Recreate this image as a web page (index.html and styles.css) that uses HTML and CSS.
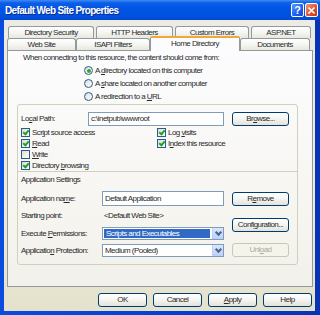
FILE: index.html
```html
<!DOCTYPE html>
<html lang="en">
<head>
  <meta charset="UTF-8">
  <title>Default Web Site Properties</title>
  <link rel="stylesheet" href="styles.css">
</head>
<body>
  <div class="window">
    <div class="titlebar">
      <span class="title">Default Web Site Properties</span>
      <div class="title-buttons">
        <span class="tbtn help">?</span>
        <span class="tbtn close">
          <svg width="9" height="9" viewBox="0 0 9 9"><path d="M1.5 1.5 L7.5 7.5 M7.5 1.5 L1.5 7.5" stroke="#fff" stroke-width="1.6"/></svg>
        </span>
      </div>
    </div>

    <div class="frame">
      <div class="tabs back">
        <span class="tab t-sec">Directory Security</span>
        <span class="tab t-http">HTTP Headers</span>
        <span class="tab t-err">Custom Errors</span>
        <span class="tab t-asp">ASP.NET</span>
      </div>
      <div class="tabs front">
        <span class="tab t-web">Web Site</span>
        <span class="tab t-isapi">ISAPI Filters</span>
        <span class="tab t-home active">Home Directory</span>
        <span class="tab t-docs">Documents</span>
      </div>

      <div class="panel">
        <div class="intro">When connecting to this resource, the content should come from:</div>
        <div class="radios">
          <div class="radio-row"><span class="radio on"></span><span>A <u>d</u>irectory located on this computer</span></div>
          <div class="radio-row"><span class="radio"></span><span>A <u>s</u>hare located on another computer</span></div>
          <div class="radio-row"><span class="radio"></span><span>A redirection to a <u>U</u>RL</span></div>
        </div>

        <div class="groupbox">
          <div class="path-row">
            <span class="lbl-path">Lo<u>c</u>al Path:</span>
            <span class="field path">c:\inetpub\wwwroot</span>
            <span class="btn browse">Br<u>o</u>wse...</span>
          </div>

          <div class="checks">
            <div class="check-col first">
              <div class="check-row"><span class="check on"></span><span>Scr<u>i</u>pt source access</span></div>
              <div class="check-row"><span class="check on"></span><span><u>R</u>ead</span></div>
              <div class="check-row"><span class="check"></span><span><u>W</u>rite</span></div>
              <div class="check-row"><span class="check on"></span><span>Directory <u>b</u>rowsing</span></div>
            </div>
            <div class="check-col">
              <div class="check-row"><span class="check on"></span><span>Log <u>v</u>isits</span></div>
              <div class="check-row"><span class="check on"></span><span>I<u>n</u>dex this resource</span></div>
            </div>
          </div>

          <div class="divider"></div>
          <div class="section-title">Application Settings</div>

          <div class="app">
            <div class="app-fields">
              <div class="app-row r-name">
                <span class="lbl">Application na<u>m</u>e:</span>
                <span class="field">Default Application</span>
              </div>
              <div class="app-row r-start">
                <span class="lbl">Starting point:</span>
                <span class="value">&lt;Default Web Site&gt;</span>
              </div>
              <div class="app-row r-exec">
                <span class="lbl">Execute <u>P</u>ermissions:</span>
                <span class="select focus"><span class="sel-text">Scripts and Executables</span><span class="arrow"></span></span>
              </div>
              <div class="app-row r-prot">
                <span class="lbl">Applicatio<u>n</u> Protection:</span>
                <span class="select"><span class="sel-text">Medium (Pooled)</span><span class="arrow"></span></span>
              </div>
            </div>
            <div class="app-buttons">
              <span class="btn remove">R<u>e</u>move</span>
              <span class="btn config">Confi<u>g</u>uration...</span>
              <span class="btn unload disabled">Unl<u>o</u>ad</span>
            </div>
          </div>
        </div>
      </div>

      <div class="dialog-buttons">
        <span class="btn">OK</span>
        <span class="btn">Cancel</span>
        <span class="btn"><u>A</u>pply</span>
        <span class="btn">Help</span>
      </div>
    </div>
  </div>
</body>
</html>
```

FILE: styles.css
```css
* {
  box-sizing: border-box;
}

body {
  margin: 0;
  width: 320px;
  height: 315px;
  overflow: hidden;
  font-family: 'Liberation Sans', Arial, sans-serif;
  font-size: 8px;
  letter-spacing: -0.55px;
  color: #2a2a2a;
}

u {
  text-decoration: underline;
  text-underline-offset: 1px;
}

.window {
  height: 315px;
  display: flex;
  flex-direction: column;
  background: linear-gradient(to right, #0a4be0, #0640d0 50%, #0733b8);
}

/* title bar */
.titlebar {
  height: 20px;
  display: flex;
  align-items: center;
  justify-content: space-between;
  padding: 0 2px 0 5px;
  background: linear-gradient(#3f8cf3 0, #0a5ee8 3px, #0055e5 45%, #0050dd 85%, #0346cc 100%);
}

.title {
  color: #fff;
  font-weight: bold;
  font-size: 10px;
  letter-spacing: -0.65px;
  text-shadow: 1px 1px 0 #0a2b8c;
}

.title-buttons {
  display: flex;
  gap: 1px;
}

.tbtn {
  width: 13px;
  height: 14px;
  border: 1px solid #fff;
  border-radius: 2px;
  display: flex;
  align-items: center;
  justify-content: center;
  color: #fff;
  font-weight: bold;
  font-size: 11px;
  letter-spacing: 0;
}

.tbtn.help {
  background: linear-gradient(135deg, #5a9bff, #1a5ef0 60%, #1248d0);
}

.tbtn.close {
  background: linear-gradient(135deg, #f29a7c, #e2552e 55%, #c23a16);
}

/* dialog body */
.frame {
  flex: 1;
  margin: 0 5px 4px 4px;
  padding: 6px 2px 0 3px;
  background: linear-gradient(#ecebe4, #ece9d8 70%, #e4e1cc);
  display: flex;
  flex-direction: column;
}

.tabs {
  display: flex;
  height: 12px;
  align-items: flex-end;
}

.tab {
  height: 12px;
  border: 1px solid #919b9c;
  border-bottom: none;
  border-radius: 3px 3px 0 0;
  background: linear-gradient(#ffffff, #f3f3ef 60%, #e8e7df);
  text-align: center;
  line-height: 11px;
  color: #2a2a2a;
}

.tabs.back {
  padding-left: 1px;
  gap: 2px;
}

.t-sec { width: 86px; }
.t-http { width: 77px; }
.t-err { width: 74px; }
.t-asp { width: 60px; }

.t-web { width: 69px; }
.t-isapi { width: 74px; }
.t-home { width: 90px; }
.t-docs { width: 70px; }

.tab.active {
  position: relative;
  z-index: 2;
  height: 15px;
  margin-bottom: -1px;
  border-top: 2px solid #f1a83b;
  background: #fcfcfe;
  line-height: 12px;
  border-radius: 2px 2px 0 0;
}

.panel {
  width: 306px;
  height: 237px;
  border: 1px solid #919b9c;
  background: linear-gradient(#fcfcfe, #f6f5f0 70%, #f1f0ea);
  position: relative;
  z-index: 1;
}

.intro {
  margin: 1px 0 0 15px;
  height: 12px;
  line-height: 12px;
}

.radios {
  margin-left: 76px;
}

.radio-row {
  height: 13px;
  display: flex;
  align-items: center;
  gap: 2px;
}

.radio {
  width: 9px;
  height: 9px;
  border: 1px solid #2c5a8a;
  border-radius: 50%;
  background: linear-gradient(135deg, #dcdcd6, #ffffff);
  display: flex;
  align-items: center;
  justify-content: center;
}

.radio.on::after {
  content: "";
  width: 4px;
  height: 4px;
  border-radius: 50%;
  background: #2fa52f;
}

.groupbox {
  margin: 1px 14px 0 9px;
  height: 161px;
  border: 1px solid #d0d0bf;
  border-radius: 3px;
}

.path-row {
  margin-top: 6px;
  height: 15px;
  padding-left: 3px;
  display: flex;
  align-items: center;
}

.lbl-path {
  width: 67px;
}

.field {
  height: 14px;
  border: 1px solid #7f9db9;
  background: #fff;
  padding-left: 2px;
  line-height: 12px;
}

.field.path {
  width: 136px;
}

.btn {
  height: 14px;
  width: 57px;
  border: 1px solid #003c74;
  border-radius: 3px;
  background: linear-gradient(#ffffff, #f4f4f0 50%, #e3e2da);
  text-align: center;
  line-height: 12px;
  color: #2a2a2a;
}

.browse {
  margin-left: 8px;
}

.checks {
  display: flex;
  margin-top: 1px;
  padding-left: 3px;
}

.check-col.first {
  width: 136px;
}

.check-row {
  height: 11px;
  display: flex;
  align-items: center;
  gap: 2px;
}

.check {
  width: 9px;
  height: 9px;
  border: 1px solid #2c5a8a;
  background: linear-gradient(135deg, #dcdcd6, #ffffff);
  display: flex;
  align-items: center;
  justify-content: center;
}

.check.on::after {
  content: "";
  width: 2px;
  height: 4px;
  border: solid #21a121;
  border-width: 0 2px 2px 0;
  transform: translateY(-1px) rotate(40deg);
}

.divider {
  height: 1px;
  background: #d0d0bf;
}

.section-title {
  margin-top: 3px;
  height: 10px;
  line-height: 10px;
  padding-left: 3px;
}

.app {
  display: flex;
  margin-top: 6px;
  padding-left: 3px;
}

.app-fields {
  width: 203px;
}

.app-row {
  display: flex;
  align-items: center;
}

.app-row .lbl {
  width: 81px;
}

.app-row .field,
.app-row .select {
  width: 122px;
}

.r-name { height: 15px; }
.r-name .field { height: 15px; line-height: 13px; }
.r-start { height: 12px; margin-top: 3px; }
.r-exec { height: 13px; margin-top: 6px; }
.r-prot { height: 13px; margin-top: 4px; }

.value {
  padding-left: 2px;
}

.select {
  height: 13px;
  border: 1px solid #7f9db9;
  background: #fff;
  display: flex;
  align-items: stretch;
}

.sel-text {
  flex: 1;
  padding-left: 2px;
  line-height: 11px;
}

.select.focus .sel-text {
  background: #316ac5;
  color: #fff;
  margin: 1px 2px 1px 1px;
  line-height: 9px;
}

.arrow {
  width: 11px;
  background: linear-gradient(#d8e5fd, #bcd0f8);
  border-left: 1px solid #b9d1fa;
  display: flex;
  align-items: center;
  justify-content: center;
}

.arrow::after {
  content: "";
  width: 3px;
  height: 3px;
  border: solid #4d6185;
  border-width: 0 2px 2px 0;
  transform: translateY(-1px) rotate(45deg);
}

.app-buttons {
  margin-left: 8px;
  display: flex;
  flex-direction: column;
}

.remove { margin-top: 1px; }
.config { margin-top: 12px; }
.unload { margin-top: 11px; }

.btn.disabled {
  border-color: #c9c7ba;
  color: #aca899;
  background: #f5f4ea;
}

.dialog-buttons {
  margin-top: 6px;
  padding-right: 1px;
  display: flex;
  justify-content: flex-end;
  gap: 6px;
}

.dialog-buttons .btn {
  width: 49px;
}
```
